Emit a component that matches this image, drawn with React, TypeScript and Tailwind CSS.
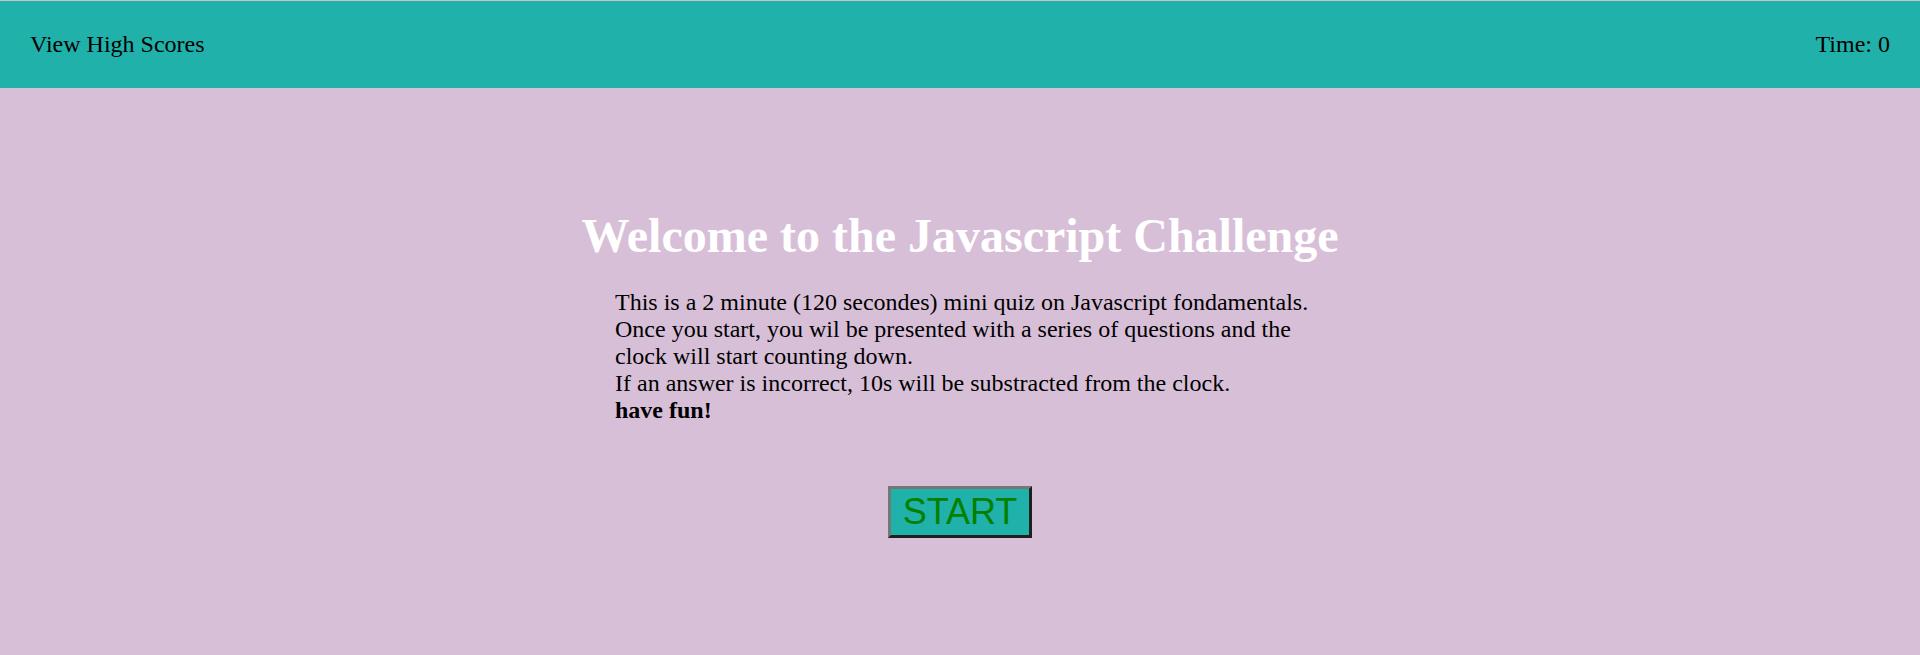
export default function App() {
  return (
    <div className="min-h-screen bg-[#d8bfd8] font-['Liberation_Serif',_'Times_New_Roman',_serif] text-black">
      <header className="h-[88px] border-t border-[#c4c4c4] bg-[#20b2aa] px-[30px] flex items-center justify-between text-[24px] leading-[27px]">
        <a href="#" className="text-black">View High Scores</a>
        <span>Time: 0</span>
      </header>

      <main className="flex flex-col items-center pt-[120px]">
        <h1 className="text-[48px] font-bold leading-[55px] text-white text-center">
          Welcome to the Javascript Challenge
        </h1>
        <div className="w-[720px] pl-[15px] mt-[26px] text-[24px] leading-[27px]">
          <p>This is a 2 minute (120 secondes) mini quiz on Javascript fondamentals.</p>
          <p>Once you start, you wil be presented with a series of questions and the clock will start counting down.</p>
          <p>If an answer is incorrect, 10s will be substracted from the clock.</p>
          <p className="font-bold">have fun!</p>
        </div>
        <button
          type="button"
          className="mt-[62px] w-[144px] h-[52px] flex items-center justify-center bg-[#20b2aa] border-[3px] border-t-[#767676] border-l-[#767676] border-r-[#1f1f1f] border-b-[#1f1f1f] font-['Liberation_Sans',_Arial,_sans-serif] text-[36px] text-[#008000]"
        >
          START
        </button>
      </main>
    </div>
  )
}
